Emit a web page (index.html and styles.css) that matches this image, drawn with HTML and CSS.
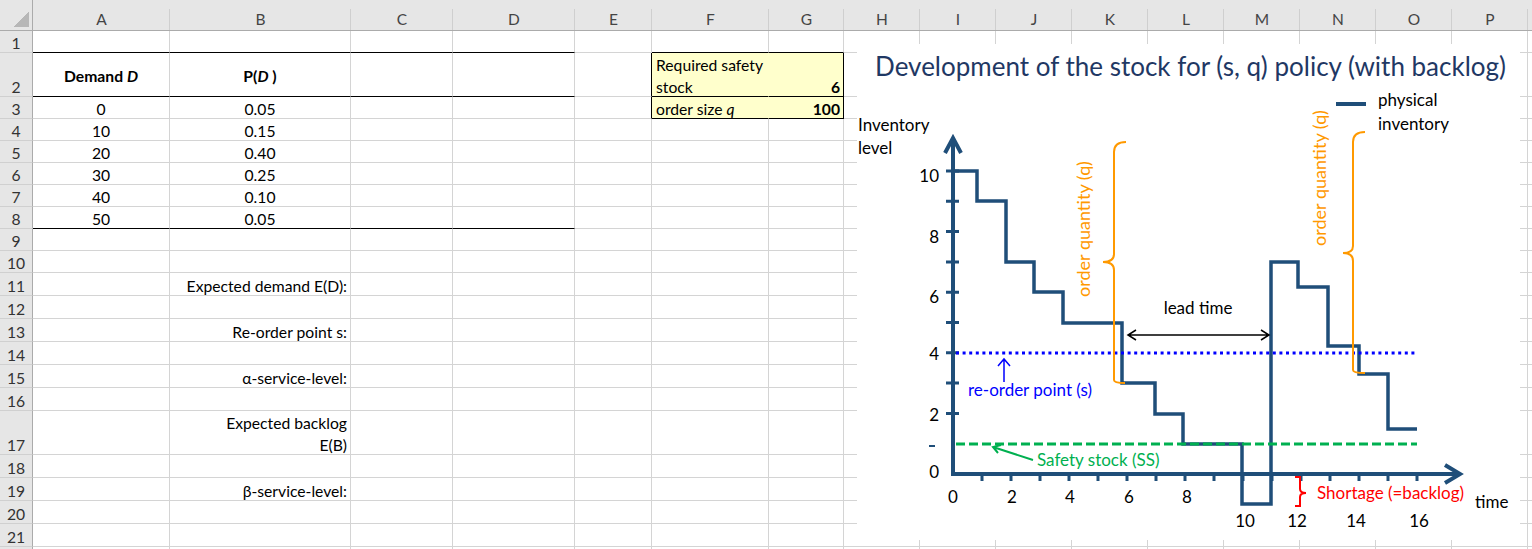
FILE: index.html
```html
<!DOCTYPE html>
<html>
<head>
<meta charset="utf-8">
<title>Stock development (s, q) policy</title>
<link rel="stylesheet" href="styles.css">
</head>
<body>
<div class="sheet">
  <div class="row hdr"><div class="corner"></div><div>A</div><div>B</div><div>C</div><div>D</div><div>E</div><div>F</div><div>G</div><div>H</div><div>I</div><div>J</div><div>K</div><div>L</div><div>M</div><div>N</div><div>O</div><div>P</div><div></div></div>
  <div class="row r22"><div class="rh">1</div><div class="bb"></div><div class="bb"></div><div class="bb"></div><div class="bb"></div><div></div><div class="bb"></div><div class="bb"></div><div></div><div></div><div></div><div></div><div></div><div></div><div></div><div></div><div></div><div></div></div>
  <div class="row r44"><div class="rh">2</div><div class="bb ctr mid b">Demand&nbsp;<i>D</i></div><div class="bb ctr mid b">P(<i>D</i>&nbsp;)</div><div class="bb"></div><div class="bb"></div><div class="br"></div><div class="yel yn bb"><span class="wrap">Required safety<br>stock</span></div><div class="yel bb br rt b">6</div><div></div><div></div><div></div><div></div><div></div><div></div><div></div><div></div><div></div><div></div></div>
  <div class="row r22"><div class="rh">3</div><div class="ctr">0</div><div class="ctr">0.05</div><div></div><div></div><div class="br"></div><div class="yel yn bb">order size&nbsp;<i>q</i></div><div class="yel bb br rt b">100</div><div></div><div></div><div></div><div></div><div></div><div></div><div></div><div></div><div></div><div></div></div>
  <div class="row r22"><div class="rh">4</div><div class="ctr">10</div><div class="ctr">0.15</div><div></div><div></div><div></div><div></div><div></div><div></div><div></div><div></div><div></div><div></div><div></div><div></div><div></div><div></div><div></div></div>
  <div class="row r22"><div class="rh">5</div><div class="ctr">20</div><div class="ctr">0.40</div><div></div><div></div><div></div><div></div><div></div><div></div><div></div><div></div><div></div><div></div><div></div><div></div><div></div><div></div><div></div></div>
  <div class="row r22"><div class="rh">6</div><div class="ctr">30</div><div class="ctr">0.25</div><div></div><div></div><div></div><div></div><div></div><div></div><div></div><div></div><div></div><div></div><div></div><div></div><div></div><div></div><div></div></div>
  <div class="row r22"><div class="rh">7</div><div class="ctr">40</div><div class="ctr">0.10</div><div></div><div></div><div></div><div></div><div></div><div></div><div></div><div></div><div></div><div></div><div></div><div></div><div></div><div></div><div></div></div>
  <div class="row r22"><div class="rh">8</div><div class="bb ctr">50</div><div class="bb ctr">0.05</div><div class="bb"></div><div class="bb"></div><div></div><div></div><div></div><div></div><div></div><div></div><div></div><div></div><div></div><div></div><div></div><div></div><div></div></div>
  <div class="row r22"><div class="rh">9</div><div></div><div></div><div></div><div></div><div></div><div></div><div></div><div></div><div></div><div></div><div></div><div></div><div></div><div></div><div></div><div></div><div></div></div>
  <div class="row r22"><div class="rh">10</div><div></div><div></div><div></div><div></div><div></div><div></div><div></div><div></div><div></div><div></div><div></div><div></div><div></div><div></div><div></div><div></div><div></div></div>
  <div class="row r23"><div class="rh">11</div><div></div><div class="rt lab">Expected demand E(D):</div><div></div><div></div><div></div><div></div><div></div><div></div><div></div><div></div><div></div><div></div><div></div><div></div><div></div><div></div><div></div></div>
  <div class="row r23"><div class="rh">12</div><div></div><div></div><div></div><div></div><div></div><div></div><div></div><div></div><div></div><div></div><div></div><div></div><div></div><div></div><div></div><div></div><div></div></div>
  <div class="row r23"><div class="rh">13</div><div></div><div class="rt lab">Re-order point s:</div><div></div><div></div><div></div><div></div><div></div><div></div><div></div><div></div><div></div><div></div><div></div><div></div><div></div><div></div><div></div></div>
  <div class="row r23"><div class="rh">14</div><div></div><div></div><div></div><div></div><div></div><div></div><div></div><div></div><div></div><div></div><div></div><div></div><div></div><div></div><div></div><div></div><div></div></div>
  <div class="row r23"><div class="rh">15</div><div></div><div class="rt lab">α-service-level:</div><div></div><div></div><div></div><div></div><div></div><div></div><div></div><div></div><div></div><div></div><div></div><div></div><div></div><div></div><div></div></div>
  <div class="row r23"><div class="rh">16</div><div></div><div></div><div></div><div></div><div></div><div></div><div></div><div></div><div></div><div></div><div></div><div></div><div></div><div></div><div></div><div></div><div></div></div>
  <div class="row r44"><div class="rh">17</div><div></div><div class="rt lab"><span class="wrap">Expected backlog<br>E(B)</span></div><div></div><div></div><div></div><div></div><div></div><div></div><div></div><div></div><div></div><div></div><div></div><div></div><div></div><div></div><div></div></div>
  <div class="row r23"><div class="rh">18</div><div></div><div></div><div></div><div></div><div></div><div></div><div></div><div></div><div></div><div></div><div></div><div></div><div></div><div></div><div></div><div></div><div></div></div>
  <div class="row r23"><div class="rh">19</div><div></div><div class="rt lab">β-service-level:</div><div></div><div></div><div></div><div></div><div></div><div></div><div></div><div></div><div></div><div></div><div></div><div></div><div></div><div></div><div></div></div>
  <div class="row r23"><div class="rh">20</div><div></div><div></div><div></div><div></div><div></div><div></div><div></div><div></div><div></div><div></div><div></div><div></div><div></div><div></div><div></div><div></div><div></div></div>
  <div class="row r23"><div class="rh">21</div><div></div><div></div><div></div><div></div><div></div><div></div><div></div><div></div><div></div><div></div><div></div><div></div><div></div><div></div><div></div><div></div><div></div></div>
  <div class="row r23"><div class="rh"></div><div></div><div></div><div></div><div></div><div></div><div></div><div></div><div></div><div></div><div></div><div></div><div></div><div></div><div></div><div></div><div></div><div></div></div>

  <svg class="chart" width="663" height="496" viewBox="857 44 663 496" xmlns="http://www.w3.org/2000/svg">
    <rect class="bg" x="857" y="44" width="663" height="496"/>
    <text class="ttl" x="1190.5" y="76" text-anchor="middle">Development of the stock for (s, q) policy (with backlog)</text>

    <line class="leg" x1="1336" y1="104" x2="1366" y2="104"/>
    <text class="lbl" x="1378" y="106">physical</text>
    <text class="lbl" x="1378" y="130">inventory</text>
    <text class="lbl" x="858" y="131">Inventory</text>
    <text class="lbl" x="858" y="154">level</text>

    <path class="tick" d="M946 171H959M946 201.3H959M946 231.6H959M946 261.9H959M946 292.2H959M946 322.5H959M946 352.8H959M946 383.1H959M946 413.4H959"/>
    <path class="tick" d="M982 474V481M1011 474V481M1040 474V481M1069 474V481M1098 474V481M1127 474V481M1156 474V481M1185 474V481M1214 474V481M1243 474V481M1272 474V481M1301 474V481M1330 474V481M1359 474V481M1388 474V481M1417 474V481"/>
    <line class="mk" x1="929" y1="446" x2="935" y2="446"/>

    <text class="lbl" x="939" y="182" text-anchor="end">10</text>
    <text class="lbl" x="939" y="243" text-anchor="end">8</text>
    <text class="lbl" x="939" y="303" text-anchor="end">6</text>
    <text class="lbl" x="939" y="360" text-anchor="end">4</text>
    <text class="lbl" x="939" y="421" text-anchor="end">2</text>
    <text class="lbl" x="939" y="478" text-anchor="end">0</text>

    <text class="lbl" x="953" y="503" text-anchor="middle">0</text>
    <text class="lbl" x="1012" y="503" text-anchor="middle">2</text>
    <text class="lbl" x="1070" y="503" text-anchor="middle">4</text>
    <text class="lbl" x="1129" y="503" text-anchor="middle">6</text>
    <text class="lbl" x="1187" y="503" text-anchor="middle">8</text>
    <text class="lbl" x="1245" y="527" text-anchor="middle">10</text>
    <text class="lbl" x="1297" y="527" text-anchor="middle">12</text>
    <text class="lbl" x="1356" y="527" text-anchor="middle">14</text>
    <text class="lbl" x="1419" y="527" text-anchor="middle">16</text>
    <text class="lbl" x="1475" y="508">time</text>

    <path class="step" d="M953 171H977V201H1006V262H1034V292H1063V323H1122V383H1155V414H1183V444H1242V504H1271V262H1298V287H1328V346H1359V374H1388V429H1417"/>

    <line class="dot" x1="956" y1="353" x2="1417" y2="353"/>
    <line class="dash" x1="956" y1="444" x2="1417" y2="444"/>

    <path class="axis" d="M953 476V139M945 153L953 138L961 153"/>
    <path class="axis" d="M951 474H1459M1445 465L1460 474L1445 483"/>

    <path class="barrow" d="M1004 382V359M998 366L1004 359L1010 366"/>
    <text class="lbl blue" x="968" y="396">re-order point (s)</text>

    <path class="garrow" d="M1033 460L993 447M1001 445L993 447L998 453"/>
    <text class="lbl green" x="1037" y="466">Safety stock (SS)</text>

    <path class="karrow" d="M1128 335H1269M1136 330L1128 335L1136 340M1261 330L1269 335L1261 340"/>
    <text class="lbl" x="1198" y="314" text-anchor="middle">lead time</text>

    <path class="brace" d="M1126 142Q1114 142 1114 152V254Q1114 262 1103 262Q1114 262 1114 270V380Q1114 383 1125 383"/>
    <text class="lbl orange" transform="translate(1090 229) rotate(-90)" text-anchor="middle">order quantity (q)</text>

    <path class="brace" d="M1365 132Q1353 132 1353 142V246Q1353 253 1343 253Q1353 253 1353 261V370Q1353 373 1365 373"/>
    <text class="lbl orange" transform="translate(1326 178) rotate(-90)" text-anchor="middle">order quantity (q)</text>

    <path class="rbrace" d="M1295 477H1300V489Q1300 493 1306 493Q1300 493 1300 497V506H1295"/>
    <text class="lbl red" x="1317" y="499">Shortage (=backlog)</text>
  </svg>
</div>
</body>
</html>
```

FILE: styles.css
```css
:root {
  --cols: 33px 137px 181px 102px 122px 77px 117px 75px repeat(9, 76px) 1fr;
  --grid: #d4d4d4;
}

html, body {
  margin: 0;
  padding: 0;
  background: #fff;
  overflow: hidden;
}

body {
  font-family: Lato, "Open Sans", "Liberation Sans", sans-serif;
}

.sheet {
  position: relative;
  width: 1532px;
  height: 549px;
  overflow: hidden;
}

.row {
  display: grid;
  grid-template-columns: var(--cols);
}

.row > div {
  box-sizing: border-box;
  border-right: 1px solid var(--grid);
  border-bottom: 1px solid var(--grid);
  display: flex;
  align-items: flex-end;
  padding: 0 3px;
  font-size: 15.7px;
  line-height: 18px;
  color: #000;
  white-space: nowrap;
  overflow: hidden;
}

.r22 { height: 22px; }
.r23 { height: 23px; }
.r44 { height: 44px; }

.hdr { height: 31px; }

.hdr > div {
  justify-content: center;
  border-right: none;
  border-bottom: 1px solid #ababab;
  background: linear-gradient(#cfcfcf, #cfcfcf) right bottom / 1px 21px no-repeat, #e6e6e6;
  color: #444;
  padding-bottom: 2px;
  font-size: 15.5px;
}

.hdr > .corner {
  background:
    linear-gradient(to bottom right, transparent 50%, #b7b7b7 50%) right 3px bottom 3px / 15px 15px no-repeat,
    #e6e6e6;
  border-right: 1px solid #ababab;
}

.row > .rh {
  justify-content: center;
  background: #e6e6e6;
  border-right: 1px solid #ababab;
  border-bottom: 1px solid #d0d0d0;
  color: #333;
  padding: 0;
}

.ctr { justify-content: center; }
.row > .mid { align-items: center; padding-top: 3px; }
.row > .rt { justify-content: flex-end; }
.b { font-weight: bold; }
.lab { color: #1f3a70; }

.row > .bb { border-bottom-color: #000; }
.row > .br { border-right-color: #000; }
.row > .yel { background: #ffffcc; }
.row > .yn { border-right-color: #ffffcc; padding-left: 4px; }

.wrap {
  display: block;
  white-space: normal;
  line-height: 22px;
  margin-bottom: -2px;
}

.rt .wrap { text-align: right; }

/* chart */
.chart {
  position: absolute;
  left: 857px;
  top: 44px;
  font-family: Lato, "Open Sans", "Liberation Sans", sans-serif;
}

.chart .bg { fill: #fff; }
.chart .ttl { font-size: 26px; fill: #1f3864; }
.chart .lbl { font-size: 17px; fill: #000; }
.chart .blue { fill: #0000ff; }
.chart .green { fill: #00b050; }
.chart .red { fill: #ff0000; }
.chart .orange { fill: #ff9900; font-size: 18px; }

.chart .axis { fill: none; stroke: #1f4e79; stroke-width: 4; }
.chart .tick { fill: none; stroke: #1f4e79; stroke-width: 3; }
.chart .mk { stroke: #1f4e79; stroke-width: 2; }
.chart .step { fill: none; stroke: #1f4e79; stroke-width: 3.5; }
.chart .leg { stroke: #1f4e79; stroke-width: 4; }
.chart .dot { stroke: #0000ff; stroke-width: 3; stroke-dasharray: 3 3.6; }
.chart .dash { stroke: #00b050; stroke-width: 3; stroke-dasharray: 9 4; }
.chart .barrow { fill: none; stroke: #0000ff; stroke-width: 1.5; }
.chart .garrow { fill: none; stroke: #00b050; stroke-width: 2; }
.chart .karrow { fill: none; stroke: #000; stroke-width: 1.5; }
.chart .brace { fill: none; stroke: #ff9900; stroke-width: 2; }
.chart .rbrace { fill: none; stroke: #ff0000; stroke-width: 2; }
```
